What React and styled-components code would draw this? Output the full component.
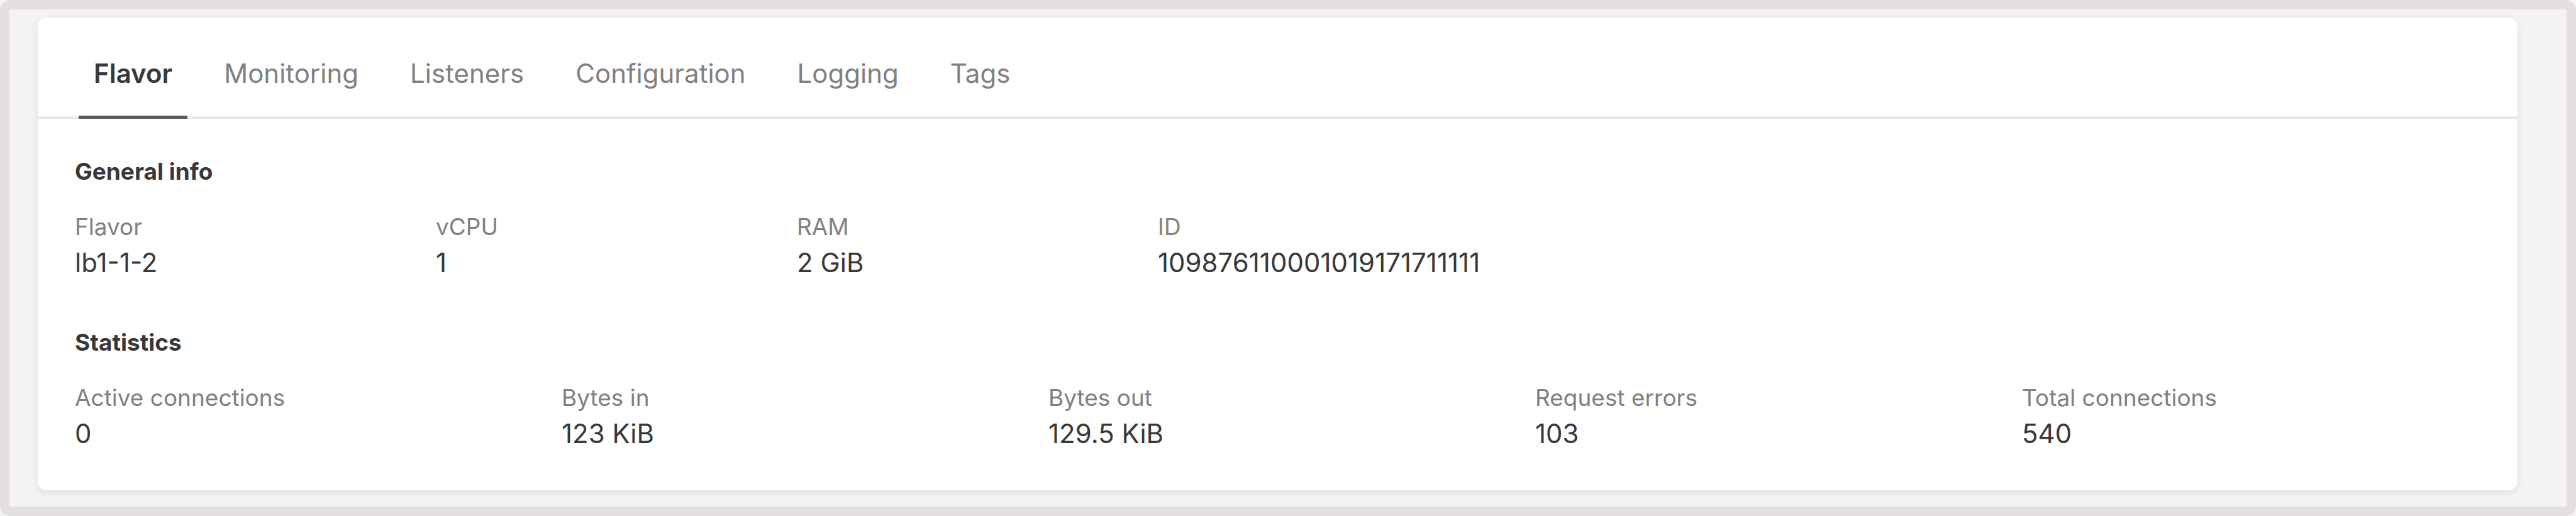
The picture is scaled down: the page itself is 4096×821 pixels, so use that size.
import React, { useState } from "react";
import styled, { createGlobalStyle } from "styled-components";

const GlobalStyle = createGlobalStyle`
  *, *::before, *::after { box-sizing: border-box; }
  body {
    margin: 0;
    background: #f3f3f3;
    color: #383838;
    font-family: Inter, "Liberation Sans", sans-serif;
  }
`;

const Frame = styled.main`
  display: flex;
  flex-direction: column;
  min-height: 100vh;
  padding: 13px 78px 26px 45px;
  border: 15px solid #e3dfde;
  border-radius: 17px;
  background: #f3f3f3;
`;

const Card = styled.section`
  flex: 1;
  border-radius: 14px;
  background: #ffffff;
  box-shadow: 0 4px 12px rgba(0, 0, 0, 0.08);
`;

const TabList = styled.div`
  display: flex;
  gap: 34px;
  padding: 0 65px;
  box-shadow: inset 0 -2px #e6e6e6, inset 0 -4px #f0f0f0;
`;

const Tab = styled.button`
  margin: 0;
  padding: 61px 24px 39px;
  border: 0;
  border-bottom: 5px solid ${(p) => (p.$active ? "#5a5a5a" : "transparent")};
  background: none;
  color: ${(p) => (p.$active ? "#383838" : "#808080")};
  font-family: inherit;
  font-size: 42px;
  font-weight: ${(p) => (p.$active ? 600 : 400)};
  line-height: 56px;
  white-space: nowrap;
  cursor: pointer;
`;

const Panel = styled.div`
  display: flex;
  flex-direction: column;
  gap: 77px;
  padding: 62px 59px;
`;

const Group = styled.section`
  display: flex;
  flex-direction: column;
  gap: 44px;
`;

const Heading = styled.h2`
  margin: 0;
  font-size: 37px;
  font-weight: 700;
  line-height: 44px;
`;

const Fields = styled.dl`
  display: grid;
  grid-template-columns: ${(p) => p.$columns};
  column-gap: 45px;
  margin: 0;
`;

const Field = styled.div`
  display: flex;
  flex-direction: column;
  gap: 7px;
`;

const Label = styled.dt`
  color: #808080;
  font-size: 37px;
  line-height: 44px;
`;

const Value = styled.dd`
  margin: 0;
  font-size: 42px;
  line-height: 56px;
  white-space: nowrap;
`;

const tabs = ["Flavor", "Monitoring", "Listeners", "Configuration", "Logging", "Tags"];

const groups = [
  {
    title: "General info",
    columns: "repeat(3, 529px) 1fr",
    fields: [
      ["Flavor", "lb1-1-2"],
      ["vCPU", "1"],
      ["RAM", "2 GiB"],
      ["ID", "109876110001019171711111"],
    ],
  },
  {
    title: "Statistics",
    columns: "repeat(5, 1fr)",
    fields: [
      ["Active connections", "0"],
      ["Bytes in", "123 KiB"],
      ["Bytes out", "129.5 KiB"],
      ["Request errors", "103"],
      ["Total connections", "540"],
    ],
  },
];

export default function App() {
  const [active, setActive] = useState("Flavor");
  return (
    <>
      <GlobalStyle />
      <Frame>
        <Card>
          <TabList role="tablist">
            {tabs.map((name) => (
              <Tab
                key={name}
                type="button"
                role="tab"
                aria-selected={name === active}
                $active={name === active}
                onClick={() => setActive(name)}
              >
                {name}
              </Tab>
            ))}
          </TabList>
          <Panel role="tabpanel" aria-label={active}>
            {groups.map((group) => (
              <Group key={group.title}>
                <Heading>{group.title}</Heading>
                <Fields $columns={group.columns}>
                  {group.fields.map(([label, value]) => (
                    <Field key={label}>
                      <Label>{label}</Label>
                      <Value>{value}</Value>
                    </Field>
                  ))}
                </Fields>
              </Group>
            ))}
          </Panel>
        </Card>
      </Frame>
    </>
  );
}
